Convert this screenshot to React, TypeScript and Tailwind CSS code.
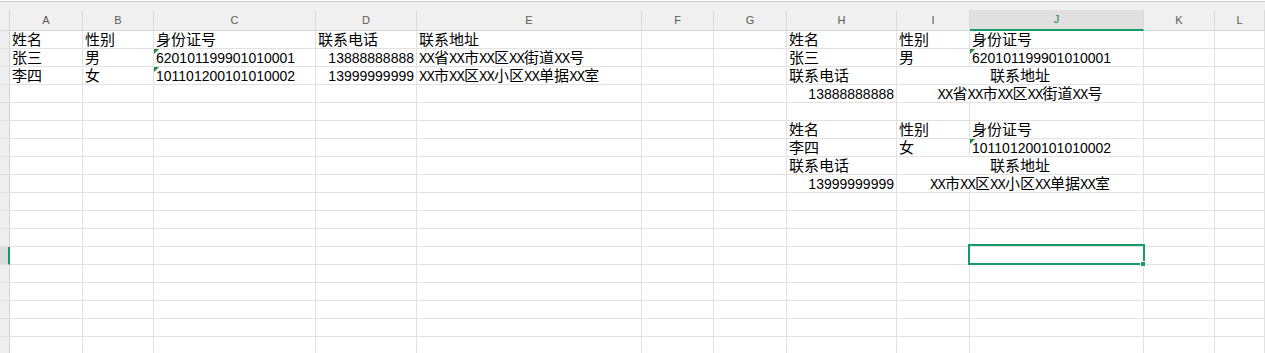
type Cell = {
  t: string;
  align?: "left" | "right" | "center";
  span?: number;
  tri?: boolean;
};

type Row = Record<string, Cell>;

const COLS = ["A", "B", "C", "D", "E", "F", "G", "H", "I", "J", "K", "L"];

const ID1 = "620101199901010001";
const ID2 = "101101200101010002";
const ADDR1 = "XX省XX市XX区XX街道XX号";
const ADDR2 = "XX市XX区XX小区XX单据XX室";

const DATA: Record<number, Row> = {
  1: {
    A: { t: "姓名" },
    B: { t: "性别" },
    C: { t: "身份证号" },
    D: { t: "联系电话" },
    E: { t: "联系地址" },
    H: { t: "姓名" },
    I: { t: "性别" },
    J: { t: "身份证号" },
  },
  2: {
    A: { t: "张三" },
    B: { t: "男" },
    C: { t: ID1, tri: true },
    D: { t: "13888888888", align: "right" },
    E: { t: ADDR1 },
    H: { t: "张三" },
    I: { t: "男" },
    J: { t: ID1, tri: true },
  },
  3: {
    A: { t: "李四" },
    B: { t: "女" },
    C: { t: ID2, tri: true },
    D: { t: "13999999999", align: "right" },
    E: { t: ADDR2 },
    H: { t: "联系电话" },
    I: { t: "联系地址", span: 2, align: "center" },
  },
  4: {
    H: { t: "13888888888", align: "right" },
    I: { t: ADDR1, span: 2, align: "center" },
  },
  6: {
    H: { t: "姓名" },
    I: { t: "性别" },
    J: { t: "身份证号" },
  },
  7: {
    H: { t: "李四" },
    I: { t: "女" },
    J: { t: ID2, tri: true },
  },
  8: {
    H: { t: "联系电话" },
    I: { t: "联系地址", span: 2, align: "center" },
  },
  9: {
    H: { t: "13999999999", align: "right" },
    I: { t: ADDR2, span: 2, align: "center" },
  },
};

// digits and half-width X's use different fonts than the CJK text
function CellText({ t }: { t: string }) {
  const parts = t.split(/(\d+|X+)/).filter(Boolean);
  return (
    <>
      {parts.map((p, i) => {
        if (/^\d+$/.test(p))
          return (
            <span key={i} className="text-[14px]">
              {p}
            </span>
          );
        if (/^X+$/.test(p))
          return (
            <span key={i} className="font-['Liberation_Mono'] text-[14px] tracking-[-0.9px]">
              {p}
            </span>
          );
        return <span key={i}>{p}</span>;
      })}
    </>
  );
}

function DataRow({ n }: { n: number }) {
  const row = DATA[n] || {};
  const selected = n === 13;
  const cells = [];
  let skip = 0;
  for (const c of COLS) {
    if (skip > 0) {
      skip--;
      continue;
    }
    const cell = row[c];
    const span = cell?.span ?? 1;
    skip = span - 1;
    const align =
      cell?.align === "right" ? "text-right" : cell?.align === "center" ? "text-center" : "text-left";
    cells.push(
      <div
        key={c}
        className={`relative h-[18px] border-r border-b border-[#e2e2e2] px-[2px] whitespace-nowrap leading-[18px] ${align} ${
          span === 2 ? "col-span-2" : ""
        }`}
      >
        {cell?.tri && (
          <span className="absolute top-0 left-0 w-0 h-0 border-t-[5px] border-r-[5px] border-t-[#1f8a3b] border-r-transparent" />
        )}
        {cell && <CellText t={cell.t} />}
      </div>
    );
  }
  return (
    <>
      <div
        className={`h-[18px] border-b border-[#e2e2e2] ${
          selected ? "bg-[#dcdcdc] border-r-2 border-r-[#159a68]" : "bg-[#efefef] border-r border-r-[#d2d2d2]"
        }`}
      />
      {cells}
    </>
  );
}

export default function App() {
  const rows = Array.from({ length: 18 }, (_, i) => i + 1);
  return (
    <div className="relative w-[1265px] h-[353px] overflow-hidden bg-white text-[15px] text-black font-['Liberation_Sans','Noto_Sans_CJK_SC',sans-serif]">
      <div className="h-[9px] border-t border-[#cccccc] bg-[#f0f0f0] mt-px" />
      <div className="grid grid-cols-[10px_73px_71px_162px_101px_225px_72px_73px_110px_73px_174px_71px_1fr]">
        <div className="h-[21px] bg-[#f0f0f0] border-r border-b border-[#d6d6d6]" />
        {COLS.map((c) => (
          <div
            key={c}
            className={`h-[21px] flex items-center justify-center text-[11px] border-r border-[#dadada] ${
              c === "J"
                ? "bg-[#e0e0e0] text-[#17875c] border-b-2 border-b-[#159a68]"
                : "bg-[#f0f0f0] text-[#5a5a5a] border-b border-b-[#d6d6d6]"
            }`}
          >
            {c}
          </div>
        ))}
        {rows.map((n) => (
          <DataRow key={n} n={n} />
        ))}
      </div>
      {/* active cell J13 */}
      <div className="absolute left-[968px] top-[244px] w-[177px] h-[21px] border-2 border-[#159a68]" />
      <div className="absolute left-[1140px] top-[261px] w-[6px] h-[6px] bg-[#159a68] border border-white" />
    </div>
  );
}
